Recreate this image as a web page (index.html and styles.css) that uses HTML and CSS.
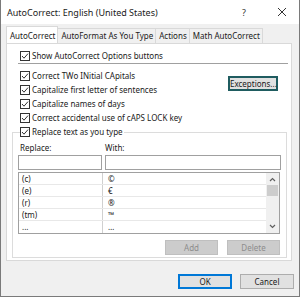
FILE: index.html
```html
<!DOCTYPE html>
<html>
<head>
<meta charset="utf-8">
<link rel="stylesheet" href="styles.css">
</head>
<body>
<div class="window">
  <div class="titlebar">
    <span class="title">AutoCorrect: English (United States)</span>
    <span class="help">?</span>
    <svg class="close" width="10" height="10" viewBox="0 0 10 10"><path d="M1 1 L9 9 M9 1 L1 9" stroke="#333" stroke-width="1" fill="none"/></svg>
  </div>
  <div class="tabs">
    <div class="tab active">AutoCorrect</div>
    <div class="tab">AutoFormat As You Type</div>
    <div class="tab">Actions</div>
    <div class="tab">Math AutoCorrect</div>
  </div>
  <div class="panel">
    <div class="check first"><svg class="box" width="10" height="10" viewBox="0 0 10 10"><rect x="0.5" y="0.5" width="9" height="9" fill="#fff" stroke="#333"/><path d="M2 5 L4 7.2 L8 2.6" stroke="#333" stroke-width="1" fill="none"/></svg>Show AutoCorrect Options buttons</div>
    <div class="sep"></div>
    <div class="opts">
      <div class="optlist">
        <div class="check"><svg class="box" width="10" height="10" viewBox="0 0 10 10"><rect x="0.5" y="0.5" width="9" height="9" fill="#fff" stroke="#333"/><path d="M2 5 L4 7.2 L8 2.6" stroke="#333" stroke-width="1" fill="none"/></svg>Correct TWo INitial CApitals</div>
        <div class="check"><svg class="box" width="10" height="10" viewBox="0 0 10 10"><rect x="0.5" y="0.5" width="9" height="9" fill="#fff" stroke="#333"/><path d="M2 5 L4 7.2 L8 2.6" stroke="#333" stroke-width="1" fill="none"/></svg>Capitalize first letter of sentences</div>
        <div class="check"><svg class="box" width="10" height="10" viewBox="0 0 10 10"><rect x="0.5" y="0.5" width="9" height="9" fill="#fff" stroke="#333"/><path d="M2 5 L4 7.2 L8 2.6" stroke="#333" stroke-width="1" fill="none"/></svg>Capitalize names of days</div>
        <div class="check"><svg class="box" width="10" height="10" viewBox="0 0 10 10"><rect x="0.5" y="0.5" width="9" height="9" fill="#fff" stroke="#333"/><path d="M2 5 L4 7.2 L8 2.6" stroke="#333" stroke-width="1" fill="none"/></svg>Correct accidental use of cAPS LOCK key</div>
      </div>
      <div class="btn exceptions">Exceptions...</div>
    </div>
    <fieldset class="group">
      <legend class="check"><svg class="box" width="10" height="10" viewBox="0 0 10 10"><rect x="0.5" y="0.5" width="9" height="9" fill="#fff" stroke="#333"/><path d="M2 5 L4 7.2 L8 2.6" stroke="#333" stroke-width="1" fill="none"/></svg>Replace text as you type</legend>
      <div class="labels"><span class="lab-replace">Replace:</span><span>With:</span></div>
      <div class="inputs"><div class="input in-replace"></div><div class="input in-with"></div></div>
      <div class="list">
        <div class="rows">
          <div class="row"><span class="c1">(c)</span><span class="c2">©</span></div>
          <div class="row"><span class="c1">(e)</span><span class="c2">€</span></div>
          <div class="row"><span class="c1">(r)</span><span class="c2">®</span></div>
          <div class="row"><span class="c1">(tm)</span><span class="c2">™</span></div>
          <div class="row last"><span class="c1">...</span><span class="c2">…</span></div>
        </div>
        <div class="scroll">
          <svg width="13" height="9" viewBox="0 0 13 9"><path d="M4 6 L6.5 3.5 L9 6" stroke="#606060" stroke-width="1.2" fill="none"/></svg>
          <div class="thumb"></div>
          <div class="spacer"></div>
          <svg width="13" height="9" viewBox="0 0 13 9"><path d="M4 3 L6.5 5.5 L9 3" stroke="#606060" stroke-width="1.2" fill="none"/></svg>
        </div>
      </div>
      <div class="actions"><div class="btn disabled">Add</div><div class="btn disabled">Delete</div></div>
    </fieldset>
  </div>
  <div class="footer">
    <div class="btn ok">OK</div>
    <div class="btn">Cancel</div>
  </div>
</div>
</body>
</html>
```
FILE: styles.css
```css
* { box-sizing: border-box; }
html, body { margin: 0; padding: 0; }
body {
  width: 300px;
  height: 297px;
  font-family: "Noto Sans", sans-serif;
  font-size: 8px;
  color: #1a1a1a;
  background: #fff;
}
.window {
  width: 300px;
  height: 297px;
  background: #f0f0f0;
  border-left: 1px solid #7a7a7a;
  border-right: 1px solid #7a7a7a;
  border-bottom: 1px solid #7a7a7a;
  display: flex;
  flex-direction: column;
}
.titlebar {
  height: 24px;
  background: #fff;
  display: flex;
  align-items: center;
  padding-left: 6px;
}
.title { font-size: 9px; flex: 1; }
.help { width: 10px; margin-right: 25px; font-size: 9px; color: #333; }
.close { margin-right: 12px; }
.tabs {
  display: flex;
  margin: 4px 0 0 5px;
  height: 15px;
  position: relative;
  z-index: 1;
}
.tab {
  height: 15px;
  line-height: 14px;
  padding: 0 2px 0 3px;
  border: 1px solid #d9d9d9;
  border-bottom: none;
  border-left: none;
  background: #f0f0f0;
}
.tab.active {
  background: #fff;
  border-left: 1px solid #d9d9d9;
  height: 17px;
  margin-top: -2px;
  line-height: 17px;
}
.panel {
  margin: 0 7px 0 5px;
  height: 218px;
  background: #fff;
  border: 1px solid #d9d9d9;
  padding-top: 5px;
}
.check {
  display: flex;
  align-items: center;
  height: 14px;
  line-height: 14px;
  white-space: nowrap;
}
.box { margin-right: 2px; flex: none; }
.first { margin-left: 13px; }
.sep {
  height: 1px;
  background: #a0a0a0;
  margin: 0 3px 5px 11px;
}
.opts { display: flex; }
.optlist { margin-left: 13px; flex: 1; }
.btn {
  height: 15px;
  line-height: 13px;
  text-align: center;
  background: #e1e1e1;
  border: 1px solid #adadad;
}
.exceptions {
  width: 50px;
  margin-top: 7px;
  margin-right: 13px;
  border: 2px solid #1f5c60;
  line-height: 11px;
}
.group {
  margin: 0 4px 0 5px;
  padding: 0 5px 0 5px;
  border: 1px solid #dcdcdc;
  height: 133px;
}
.group legend {
  padding: 0;
  margin-left: 2px;
  padding-right: 1px;
}
.labels {
  display: flex;
  height: 12px;
  line-height: 12px;
  margin-top: 3px;
  padding-left: 2px;
}
.lab-replace { width: 85px; }
.inputs { display: flex; margin-top: 1px; gap: 3px; }
.input {
  height: 15px;
  background: #fff;
  border: 1px solid #a0a0a0;
}
.in-replace { width: 84px; }
.in-with { width: 176px; }
.list {
  margin-top: 2px;
  width: 262px;
  height: 62px;
  border: 1px solid #a0a0a0;
  display: flex;
  overflow: hidden;
}
.rows { flex: 1; }
.row {
  display: flex;
  height: 12px;
  line-height: 12px;
  border-bottom: 1px solid #e8e8e8;
}
.row.last { border-bottom: none; }
.c1 {
  width: 84px;
  padding-left: 3px;
  border-right: 1px solid #d0d0d0;
}
.c2 { padding-left: 5px; }
.scroll {
  width: 13px;
  background: #f0f0f0;
  display: flex;
  flex-direction: column;
  padding-top: 2px;
  padding-bottom: 2px;
}
.thumb {
  margin: 1px 1px 0 1px;
  height: 11px;
  background: #cdcdcd;
}
.spacer { flex: 1; }
.actions {
  display: flex;
  justify-content: flex-end;
  gap: 9px;
  margin-top: 6px;
  padding-right: 1px;
}
.actions .btn { width: 53px; }
.disabled {
  background: #cccccc;
  border-color: #bfbfbf;
  color: #8d8d8d;
}
.footer {
  display: flex;
  justify-content: flex-end;
  gap: 8px;
  margin-top: 13px;
  padding-right: 5px;
}
.footer .btn { width: 54px; }
.ok { border: 1px solid #0078d7; box-shadow: inset 0 0 0 1px #0078d7; }
```
